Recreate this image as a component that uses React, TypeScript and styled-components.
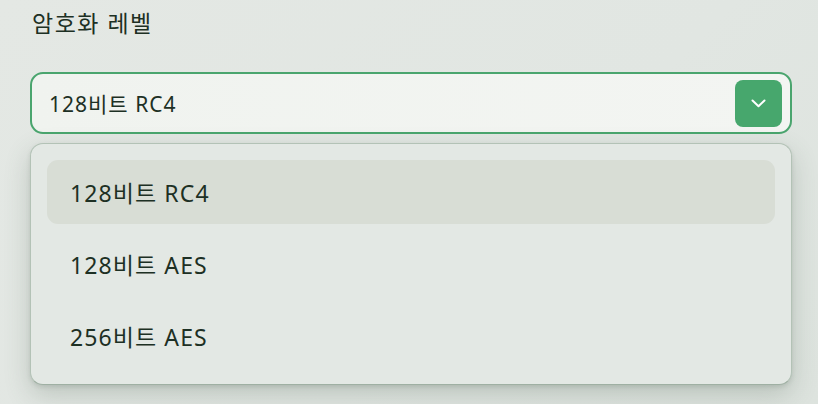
import React, { useState } from 'react'
import styled, { createGlobalStyle } from 'styled-components'

const GlobalStyle = createGlobalStyle`
  html, body {
    margin: 0;
    padding: 0;
  }
  body {
    background: linear-gradient(135deg, #e4e8e4 0%, #e1e6e2 60%, #dde3de 100%);
    font-family: 'Noto Sans', 'Noto Sans CJK KR', sans-serif;
    color: #1d3024;
    width: 818px;
    height: 404px;
    overflow: hidden;
  }
`

const Field = styled.div`
  display: flex;
  flex-direction: column;
  padding: 8px 26px 0 30px;
`

const Label = styled.div`
  font-size: 23px;
  line-height: 31px;
  padding-left: 2px;
  margin-bottom: 33px;
  letter-spacing: 1.5px;
`

const Trigger = styled.div`
  display: flex;
  align-items: center;
  justify-content: space-between;
  height: 62px;
  box-sizing: border-box;
  border: 2px solid #4aa56e;
  border-radius: 13px;
  background: linear-gradient(90deg, #f0f3ef 0%, #f3f5f2 100%);
  padding: 0 8px 0 17px;
  font-size: 21px;
  letter-spacing: 1px;
`

const ArrowButton = styled.div`
  width: 47px;
  height: 47px;
  border-radius: 8px;
  background: #47a76d;
  display: flex;
  align-items: center;
  justify-content: center;
`

const Menu = styled.ul`
  list-style: none;
  margin: 9px 0 0;
  padding: 16px;
  display: flex;
  flex-direction: column;
  gap: 8px;
  background: #e3e8e4;
  border: 1px solid #b3c2b6;
  border-bottom-color: #9fb0a3;
  border-radius: 13px;
  box-shadow: 0 10px 26px rgba(70, 90, 75, 0.24), 0 2px 4px rgba(70, 90, 75, 0.15);
`

const Option = styled.li<{ $active: boolean }>`
  height: 64px;
  display: flex;
  align-items: center;
  padding: 0 23px;
  border-radius: 11px;
  font-size: 23px;
  letter-spacing: 1.1px;
  background: ${p => (p.$active ? '#d8ddd5' : 'transparent')};
`

const options = ['128비트 RC4', '128비트 AES', '256비트 AES']

const Chevron = () => (
  <svg width='15' height='9' viewBox='0 0 15 9' fill='none'>
    <path d='M1.5 1.5 L7.5 7.2 L13.5 1.5' stroke='#ffffff' strokeWidth='2' strokeLinecap='round' strokeLinejoin='round' />
  </svg>
)

export default function App() {
  const [selected] = useState(options[0])

  return (
    <>
      <GlobalStyle />
      <Field>
        <Label>암호화 레벨</Label>
        <Trigger>
          <span>{selected}</span>
          <ArrowButton>
            <Chevron />
          </ArrowButton>
        </Trigger>
        <Menu>
          {options.map(opt => (
            <Option key={opt} $active={opt === selected}>
              {opt}
            </Option>
          ))}
        </Menu>
      </Field>
    </>
  )
}
